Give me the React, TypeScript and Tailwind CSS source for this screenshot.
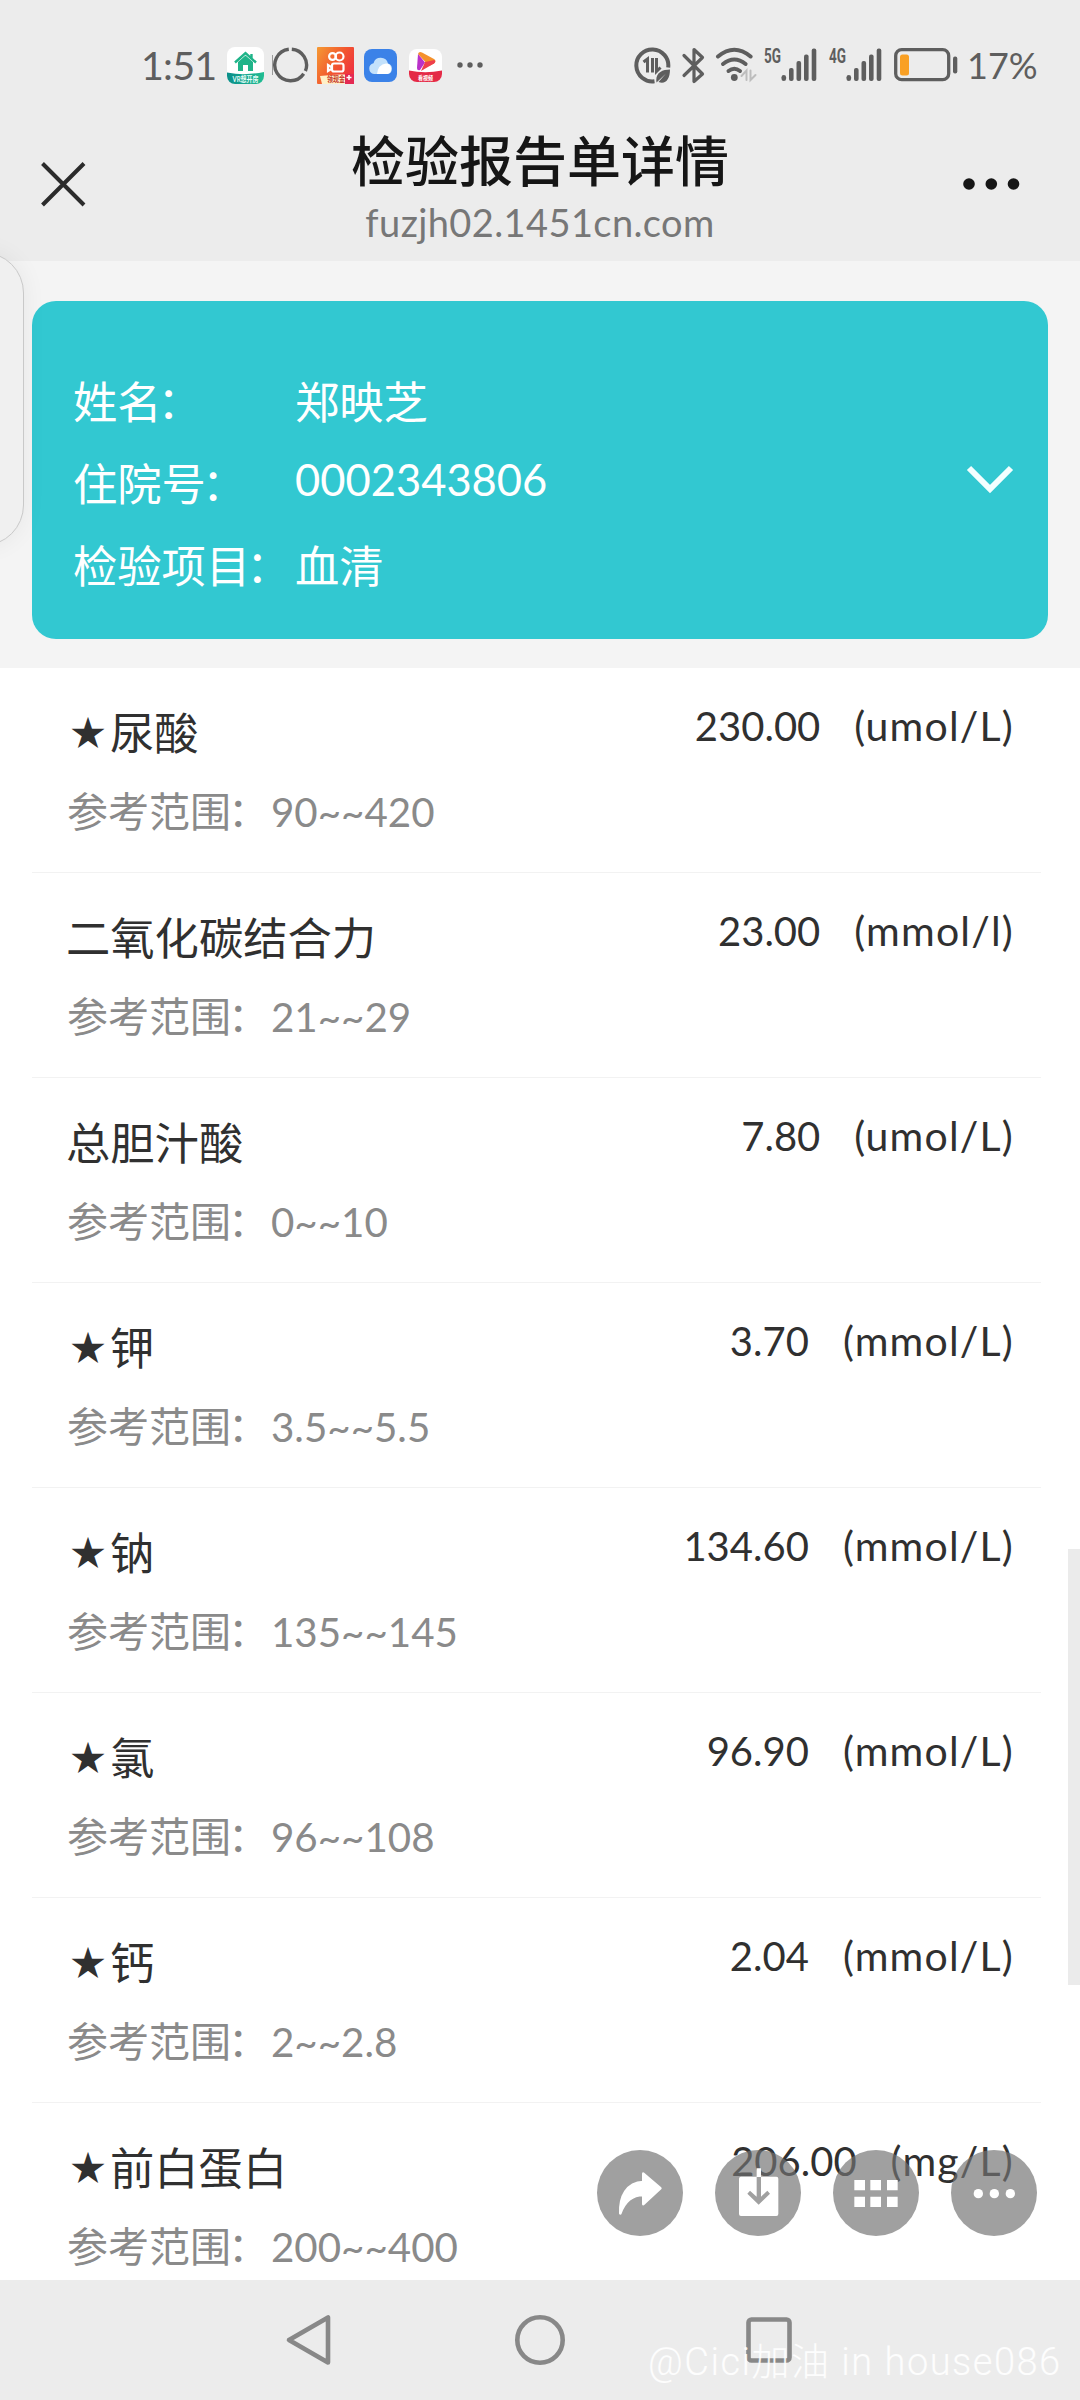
import type { ReactNode } from 'react';

interface LabItem {
  name: string;
  starred?: boolean;
  value: string;
  unit: string;
  range: string;
}

const patient = [
  { label: '姓名', value: '郑映芝' },
  { label: '住院号', value: '0002343806', numeric: true },
  { label: '检验项目', value: '血清' },
];

const items: LabItem[] = [
  { name: '尿酸', starred: true, value: '230.00', unit: '(umol/L)', range: '90~~420' },
  { name: '二氧化碳结合力', value: '23.00', unit: '(mmol/l)', range: '21~~29' },
  { name: '总胆汁酸', value: '7.80', unit: '(umol/L)', range: '0~~10' },
  { name: '钾', starred: true, value: '3.70', unit: '(mmol/L)', range: '3.5~~5.5' },
  { name: '钠', starred: true, value: '134.60', unit: '(mmol/L)', range: '135~~145' },
  { name: '氯', starred: true, value: '96.90', unit: '(mmol/L)', range: '96~~108' },
  { name: '钙', starred: true, value: '2.04', unit: '(mmol/L)', range: '2~~2.8' },
  { name: '前白蛋白', starred: true, value: '206.00', unit: '(mg/L)', range: '200~~400' },
];

function SignalBars({ network, className }: { network: string; className: string }) {
  return (
    <svg className={className} width="54" height="36" viewBox="0 0 54 36" fill="#5e5e5e" overflow="visible">
      <text
        x="0"
        y="15.5"
        fontSize="19.5"
        fontWeight="700"
        fontFamily="Roboto, sans-serif"
        textLength="17"
        lengthAdjust="spacingAndGlyphs"
      >
        {network}
      </text>
      <rect x="17.5" y="28" width="4.6" height="6" rx="2.3" />
      <rect x="25" y="21" width="4.6" height="13" rx="2" />
      <rect x="32.5" y="14" width="4.6" height="20" rx="2" />
      <rect x="40" y="7.5" width="4.6" height="26.5" rx="2" />
      <rect x="47.7" y="1.5" width="4.6" height="32.5" rx="2" />
    </svg>
  );
}

function StatusBar() {
  return (
    <div className="flex h-[38px] items-center pl-[141px] text-[#5e5e5e]">
      <span className="w-[86px] text-[39.5px] leading-[38px] tracking-[-0.8px]">1:51</span>

      {/* VR house app */}
      <svg width="37" height="37" viewBox="0 0 37 37">
        <defs>
          <clipPath id="vr">
            <rect width="37" height="37" rx="8" />
          </clipPath>
          <linearGradient id="vrFoot" x1="0" x2="1">
            <stop offset="0" stopColor="#0b8f8a" />
            <stop offset="1" stopColor="#21bd92" />
          </linearGradient>
        </defs>
        <g clipPath="url(#vr)">
          <rect width="37" height="37" fill="#fff" />
          <path d="M8 15.5 18.5 6 29 15.5M24.500 7v4" fill="none" stroke="#1fb489" strokeWidth="2.4" />
          <path d="M11 15 18.500 8.500 26 15V24H21v-6h-5v6h-5Z" fill="#1fb489" />
          <path d="M0 25.500Q18 29 37 25V37H0Z" fill="url(#vrFoot)" />
        </g>
        <text x="5.500" y="34.500" fontSize="7.500" fontWeight="700" fill="#e9fffa" textLength="26" lengthAdjust="spacingAndGlyphs">
          VR想开房
        </text>
      </svg>

      {/* Broken ring */}
      <svg className="ml-[8px]" width="37" height="36" viewBox="0 0 37 36" fill="none" stroke="#5e5e5e" strokeWidth="3.4">
        <path d="M19.800 2.300A15.800 15.800 0 0 1 33.400 24" />
        <path d="M31.700 26.800A15.800 15.800 0 1 1 16.800 2.300" />
        <path d="M.5 8v20" stroke="#9a9a9a" strokeWidth="1" />
      </svg>

      {/* Short video app */}
      <svg className="ml-[8px]" width="37" height="37" viewBox="0 0 37 37">
        <defs>
          <linearGradient id="ks" x1="0" y1="0" x2="1" y2=".6">
            <stop offset="0" stopColor="#f59a33" />
            <stop offset=".6" stopColor="#f2562f" />
            <stop offset="1" stopColor="#ef3340" />
          </linearGradient>
        </defs>
        <rect width="37" height="37" rx="1" fill="url(#ks)" />
        <g fill="none" stroke="#fff" strokeWidth="2.200">
          <circle cx="15.500" cy="9.500" r="3.400" />
          <circle cx="22.500" cy="9.500" r="4" />
          <rect x="15" y="16.500" width="11.500" height="8" rx="2" />
          <path d="M15 20.500 11 18v6l4-2.500" />
        </g>
        <path d="M3 29Q18 27 28 27.500V37H5Z" fill="#fff0c8" />
        <text x="10" y="35" fontSize="8" fontWeight="700" fill="#c4331f" textLength="18" lengthAdjust="spacingAndGlyphs">
          领现金
        </text>
        <path d="M28 27h9v10h-9z" fill="#e42a52" />
        <path d="M32 28v5M29.500 30.500h5" stroke="#fff" strokeWidth="1.500" />
      </svg>

      {/* Cloud drive app */}
      <svg className="ml-[10px]" width="33" height="33" viewBox="0 0 33 33">
        <rect width="33" height="33" rx="8" fill="#3b82e8" />
        <path d="M10 25a5.500 5.500 0 0 1-.5-10.800A7.500 7.500 0 0 1 24 14.500a5.400 5.400 0 0 1-.5 10.500Z" fill="#c3e1fb" />
        <path d="M13 25q1-9.500 9-10.500a5.400 5.400 0 0 1 1.500 10.500Z" fill="#fff" />
      </svg>

      {/* Video player app */}
      <svg className="ml-[12px]" width="33" height="33" viewBox="0 0 33 33">
        <defs>
          <clipPath id="vp">
            <rect width="33" height="33" rx="8" />
          </clipPath>
        </defs>
        <g clipPath="url(#vp)">
          <rect width="33" height="33" fill="#fff" />
          <path d="M9 5 Q10 2 13 3.500L25 10Q28 12 25 14.500L20 17Z" fill="#f5912c" />
          <path d="M9 5 16 13.500 11 21Q8 22 8 19Z" fill="#b932c9" />
          <path d="M25.500 11Q27 13 25 14.500L12 22 16 13Z" fill="#ee3f4d" />
          <path d="M0 21.500Q16 25 33 21.500V33H0Z" fill="#e42a46" />
        </g>
        <text x="9" y="30.500" fontSize="6" fontWeight="700" fill="#fff" textLength="15" lengthAdjust="spacingAndGlyphs">
          看视频
        </text>
      </svg>

      <svg className="ml-[15px]" width="26" height="6" viewBox="0 0 26 6" fill="#5e5e5e">
        <circle cx="3" cy="3" r="2.700" />
        <circle cx="13" cy="3" r="2.700" />
        <circle cx="23" cy="3" r="2.700" />
      </svg>

      {/* Data saver */}
      <svg className="ml-[151px]" width="38" height="37" viewBox="0 0 38 37" fill="none" stroke="#5e5e5e">
        <path d="M20.500 34.300A16 16 0 1 1 34.200 20.500" strokeWidth="4" />
        <path d="M9.500 15 13.500 12V25.500M18.500 11V25.500M22.500 11V24.500L26.500 20.500" strokeWidth="3" />
        <path d="M22.500 35.500C21 26 28 22.500 36 22.500 36 32 31.500 38 24.500 35L32 26.500 22.500 35.500Z" fill="#5e5e5e" stroke="none" />
      </svg>

      {/* Bluetooth */}
      <svg className="ml-[9px]" width="26" height="37" viewBox="0 0 26 37" fill="none" stroke="#5e5e5e" strokeWidth="3.200" strokeLinejoin="round" strokeLinecap="round">
        <path d="M3 8.500 21.500 27 13 34.500V2.500L21.500 10.500 3 28.500" />
      </svg>

      {/* Wi-Fi */}
      <svg className="ml-[8px]" width="42" height="36" viewBox="0 0 42 36" fill="none" stroke="#5e5e5e" strokeWidth="4" strokeLinecap="round">
        <path d="M3 9.500Q19.300-4 35.600 9.500" />
        <path d="M8 17Q19.300 8 30.600 17" />
        <path d="M13.500 24Q19.300 19.500 25 24" />
        <circle cx="19.300" cy="30.500" r="3.400" fill="#5e5e5e" stroke="none" />
        <path d="M26.500 29 31.500 23.500V33M35.500 23.500V33L40.500 28" stroke="#bdbdbd" strokeWidth="2" />
      </svg>

      <SignalBars network="5G" className="ml-[7px]" />
      <SignalBars network="4G" className="ml-[11px]" />

      {/* Battery */}
      <svg className="ml-[11px]" width="64" height="34" viewBox="0 0 64 34" fill="none">
        <rect x="1.700" y="1.700" width="53" height="30" rx="6" stroke="#5e5e5e" strokeWidth="3.300" />
        <rect x="6" y="6.500" width="9" height="21" rx="2.500" fill="#f9a024" />
        <rect x="59" y="8.500" width="4.300" height="17" rx="2" fill="#5e5e5e" />
      </svg>
      <span className="ml-[9px] text-[36px] leading-[38px]">17%</span>
    </div>
  );
}

function TitleBar() {
  return (
    <div className="relative flex flex-col items-center">
      <h1 className="mt-[48px] text-[54px] leading-[60px] font-medium text-[#161616]">检验报告单详情</h1>
      <p className="mt-[6px] text-[38px] leading-[48px] tracking-[0.4px] text-[#777]">fuzjh02.1451cn.com</p>
      <button className="absolute top-[75px] left-[38px]" type="button" aria-label="关闭">
        <svg width="50" height="50" viewBox="0 0 50 50" stroke="#2b2b2b" strokeWidth="4">
          <path d="M4.500 4.500 46 46M46 4.500 4.500 46" />
        </svg>
      </button>
      <button className="absolute top-[93px] left-[962px]" type="button" aria-label="更多">
        <svg width="58" height="14" viewBox="0 0 58 14" fill="#161616">
          <circle cx="7" cy="7" r="5.800" />
          <circle cx="29.300" cy="7" r="5.800" />
          <circle cx="51.500" cy="7" r="5.800" />
        </svg>
      </button>
    </div>
  );
}

function PatientCard() {
  return (
    <section className="mx-8 flex h-[338px] items-center rounded-[24px] bg-[#32c8d1] pl-[41px] text-[44.3px] text-white">
      <div className="flex flex-1 flex-col gap-[22px] pt-[27px]">
        {patient.map((p) => (
          <div key={p.label} className="flex leading-[60px]">
            <span className="w-[222px] whitespace-nowrap">
              {p.label}
              <span className="-ml-[4px]">：</span>
            </span>
            <span className={p.numeric ? '-mt-[5px] text-[43.5px]' : ''}>{p.value}</span>
          </div>
        ))}
      </div>
      <svg className="mr-[33px] mb-[-20px]" width="50" height="32" viewBox="0 0 50 32" fill="none" stroke="#f2ffff" strokeWidth="6">
        <path d="M4 4 25 25 46 4" />
      </svg>
    </section>
  );
}

function LabRow({ item }: { item: LabItem }) {
  return (
    <li className="mr-[39px] ml-8 flex h-[205px] shrink-0 justify-between border-b border-[#f2f2f2] pr-[28px] pl-[35px]">
      <div className="pt-[35px]">
        <div className="-ml-px flex text-[44.3px] leading-[60px] text-[#303030]">
          {item.starred && <span className="w-[44px] text-center text-[35px] leading-[59px]">★</span>}
          <span>{item.name}</span>
        </div>
        <div className="mt-[19px] flex text-[41px] leading-[60px] text-[#8a8a8a]">
          <span>
            参考范围<span className="-ml-[3px]">：</span>
          </span>
          <span className="ml-[2px] text-[40.3px]">{item.range}</span>
        </div>
      </div>
      <div className="flex gap-[34px] pt-[28px] text-[40px] leading-[60px] text-[#303030]">
        <span>{item.value}</span>
        <span className="-mr-[1px] text-[41px] tracking-[1.2px]">{item.unit}</span>
      </div>
    </li>
  );
}

function RoundButton({ label, children }: { label: string; children: ReactNode }) {
  return (
    <button
      type="button"
      aria-label={label}
      className="flex size-[86px] items-center justify-center rounded-full bg-[rgba(115,115,115,0.68)]"
    >
      <svg width="86" height="86" viewBox="0 0 258 258" fill="#fff">
        {children}
      </svg>
    </button>
  );
}

function FloatingActions() {
  return (
    <div className="absolute top-[2150px] right-[43px] flex gap-8">
      <RoundButton label="分享">
        <path
          d="M139 71 190 115 139 162V135C105 135 82 157 70 190 68 140 88 98 139 96Z"
          stroke="#fff"
          strokeWidth="8"
          strokeLinejoin="round"
        />
      </RoundButton>
      <RoundButton label="保存">
        <path d="M125 55h13v26h-13zM78 80H125V140L105 122 97 131 131 164 165 131 157 122 138 140V80H184Q190 80 190 86V192Q190 198 184 198H78Q72 198 72 192V86Q72 80 78 80Z" />
      </RoundButton>
      <RoundButton label="应用">
        <path d="M64 90h32v31H64zM112 90h32v31h-32zM162 90h32v31h-32zM64 140h32v31H64zM112 140h32v31h-32zM162 140h32v31h-32z" />
      </RoundButton>
      <RoundButton label="更多">
        <circle cx="82" cy="131" r="14" />
        <circle cx="130" cy="131" r="14" />
        <circle cx="178" cy="131" r="14" />
      </RoundButton>
    </div>
  );
}

function NavBar() {
  return (
    <nav className="relative flex h-[120px] shrink-0 items-center justify-center gap-[178px] bg-[#ececec]">
      <svg width="54" height="54" viewBox="0 0 54 54" fill="none" stroke="#888" strokeWidth="4.600" strokeLinejoin="round">
        <path d="M47 4.500V49.500L8 27Z" />
      </svg>
      <svg width="54" height="54" viewBox="0 0 54 54" fill="none" stroke="#888" strokeWidth="4.600">
        <circle cx="27" cy="27" r="22.700" />
      </svg>
      <svg width="54" height="54" viewBox="0 0 54 54" fill="none" stroke="#888" strokeWidth="4.600">
        <rect x="3.500" y="6.500" width="41" height="41" rx="3" />
      </svg>
      <span className="absolute top-[57px] left-[648px] font-['Roboto','Noto_Sans_CJK_SC',sans-serif] text-[38px] leading-[50px] font-light tracking-[1.5px] whitespace-nowrap text-white/90">
        @Cici加油 in house086
      </span>
    </nav>
  );
}

export default function App() {
  return (
    <div className="relative flex h-[2400px] w-[1080px] flex-col overflow-hidden bg-white font-['Lato','Noto_Sans_CJK_SC',sans-serif]">
      <header className="h-[261px] shrink-0 bg-[#ececec] pt-[46px]">
        <StatusBar />
        <TitleBar />
      </header>

      <div className="h-[407px] shrink-0 bg-[#f4f4f4] pt-10">
        <PatientCard />
      </div>

      <ul className="flex min-h-0 flex-1 flex-col overflow-hidden bg-white">
        {items.map((item) => (
          <LabRow key={item.name} item={item} />
        ))}
      </ul>

      <NavBar />

      {/* Edge panel handle */}
      <div className="absolute top-[252px] -left-[60px] h-[294px] w-[84px] rounded-[41px] border border-[#c9c9c9] bg-[#f0f0f0] shadow-[0_0_24px_rgba(0,0,0,0.06)]" />
      {/* Scroll thumb */}
      <div className="absolute top-[1549px] right-0 h-[436px] w-[12px] bg-[#ebebeb]" />
      <FloatingActions />
    </div>
  );
}
